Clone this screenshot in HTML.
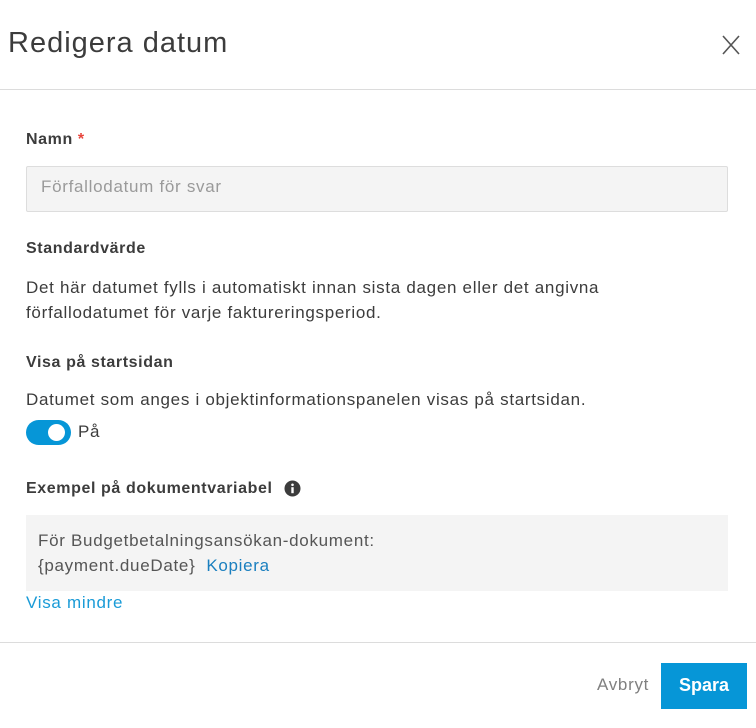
<!DOCTYPE html>
<html><head><meta charset="utf-8"><style>
*{margin:0;padding:0;box-sizing:border-box}
body{width:756px;height:728px;background:#fff;font-family:"Liberation Sans",sans-serif;color:#3c3c3c;position:relative;overflow:hidden}
.a{position:absolute;white-space:nowrap}
.lbl{font-size:16px;font-weight:bold;color:#3c3c3c;letter-spacing:0.6px}
.txt{font-size:17px;letter-spacing:0.7px;color:#3c3c3c}
</style></head><body>
<div class="a" style="left:8px;top:27px;font-size:29px;color:#3c3c3c;letter-spacing:1px">Redigera datum</div>
<svg class="a" style="left:721px;top:34px" width="20" height="22" viewBox="0 0 20 22"><path d="M2 2L18 20M18 2L2 20" stroke="#555" stroke-width="1.6" fill="none"/></svg>
<div class="a" style="left:0;top:89px;width:756px;height:1px;background:#dcdcdc"></div>
<div class="a lbl" style="left:26px;top:131px">Namn <span style="color:#e8453c">*</span></div>
<div class="a" style="left:26px;top:166px;width:702px;height:46px;background:#f4f4f4;border:1px solid #ddd;border-radius:2px"></div>
<div class="a txt" style="left:41px;top:177px;color:#9a9a9a">Förfallodatum för svar</div>
<div class="a lbl" style="left:26px;top:240px">Standardvärde</div>
<div class="a txt" style="left:26px;top:275px;line-height:25px">Det här datumet fylls i automatiskt innan sista dagen eller det angivna<br>förfallodatumet för varje faktureringsperiod.</div>
<div class="a lbl" style="left:26px;top:354px">Visa på startsidan</div>
<div class="a txt" style="left:26px;top:390px">Datumet som anges i objektinformationspanelen visas på startsidan.</div>
<div class="a" style="left:26px;top:420px;width:45px;height:25px;border-radius:13px;background:#0696d7"></div>
<div class="a" style="left:48px;top:424px;width:17px;height:17px;border-radius:50%;background:#fff"></div>
<div class="a txt" style="left:78px;top:422px">På</div>
<div class="a lbl" style="left:26px;top:480px">Exempel på dokumentvariabel</div>
<svg class="a" style="left:284px;top:480px" width="17" height="17" viewBox="0 0 17 17"><circle cx="8.5" cy="8.5" r="8" fill="#3c3c3c"/><circle cx="8.5" cy="4.8" r="1.3" fill="#fff"/><rect x="7.3" y="7.2" width="2.4" height="6" fill="#fff"/></svg>
<div class="a" style="left:26px;top:515px;width:702px;height:76px;background:#f4f4f4"></div>
<div class="a txt" style="left:38px;top:528px;line-height:25px;color:#555">För Budgetbetalningsansökan-dokument:<br>{payment.dueDate}&nbsp; <span style="color:#1a7fbf">Kopiera</span></div>
<div class="a txt" style="left:26px;top:593px;color:#1a9bd7">Visa mindre</div>
<div class="a" style="left:0;top:642px;width:756px;height:1px;background:#dcdcdc"></div>
<div class="a txt" style="left:597px;top:675px;color:#808080">Avbryt</div>
<div class="a" style="left:661px;top:663px;width:86px;height:46px;background:#0696d7"></div>
<div class="a" style="left:661px;top:675px;width:86px;text-align:center;font-size:18px;font-weight:bold;color:#fff">Spara</div>
</body></html>
